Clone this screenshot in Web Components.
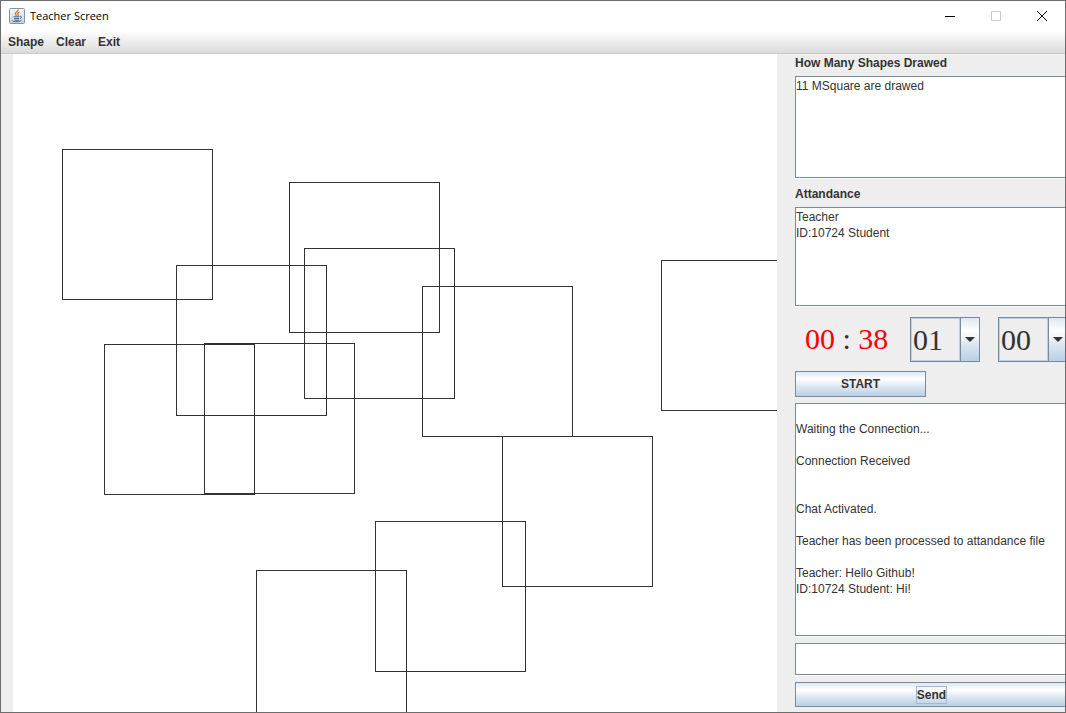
<!DOCTYPE html>
<html lang="en">
<head>
<meta charset="utf-8">
<title>Teacher Screen</title>
<style>
html, body { margin: 0; height: 100%; }
body { font: 12px/16px "Liberation Sans", Arial, sans-serif; color: #333; overflow: hidden; }
</style>
</head>
<body>
<app-window></app-window>
<script>
const define = (name, html, setup) => {
  const template = document.createElement('template');
  template.innerHTML = html;
  customElements.define(name, class extends HTMLElement {
    constructor() {
      super();
      this.attachShadow({ mode: 'open' }).append(template.content.cloneNode(true));
    }
    connectedCallback() { if (setup) setup(this, this.shadowRoot); }
  });
};

define('title-bar', `
<style>
:host { display: flex; align-items: center; height: 30px; padding-left: 8px; background: #fff; color: #000; }
h1 { flex: 1; margin: 0 0 0 5px; font: 11px/16px "Open Sans", sans-serif; }
.logo { display: block; }
button { width: 46px; height: 30px; padding: 0; border: 0; background: none; display: grid; place-items: center; }
</style>
<svg class="logo" width="16" height="16" viewBox="0 0 16 16" aria-hidden="true">
  <defs><linearGradient id="g" x2="0" y2="1"><stop stop-color="#f6f8fa"/><stop offset="1" stop-color="#c4d0dc"/></linearGradient></defs>
  <rect x=".5" y=".5" width="15" height="15" rx="1" fill="url(#g)" stroke="#7f97ae"/>
  <path d="M9 1.500c1 2-3.300 2.600-2.600 4.600.2.700 1 1 1.200 1.700M10.500 4c-1.600.7-2.600 1.600-1.400 2.700.4.500 0 1-.4 1.300" fill="none" stroke="#e0741c" stroke-width="1.300"/>
  <path d="M4.500 8.800h6M5 10.600h5M10.800 8.300c2.500-.3 1.900 1.900 0 2.400M3.300 12.400c-.6 1.700 8.500 1.500 9.200-.2M5.500 12.200h4.500" fill="none" stroke="#3f6b94" stroke-width="1"/>
</svg>
<h1>Teacher Screen</h1>
<button aria-label="Minimize"><svg width="10" height="10"><path d="M0 5h10v1H0z"/></svg></button>
<button aria-label="Maximize" disabled><svg width="10" height="10"><path d="M.5.5h9v9h-9z" fill="none" stroke="#ccc"/></svg></button>
<button aria-label="Close"><svg width="10" height="10"><path d="M0 0l10 10M10 0L0 10" stroke="#000"/></svg></button>
`);

define('menu-bar', `
<style>
:host { display: block; border-bottom: 1px solid #ccc; background: linear-gradient(#fff, #dadada); }
nav { display: flex; gap: 12px; height: 22px; padding-left: 7px; }
button { padding: 0; border: 0; background: none; color: inherit; font: bold 12px/20px "Liberation Sans", Arial, sans-serif; }
</style>
<nav><button>Shape</button><button>Clear</button><button>Exit</button></nav>
`);

define('shape-canvas', `
<style>
:host { display: flex; min-width: 0; background: #fff; overflow: hidden; }
svg { flex: 1; min-width: 0; height: auto; }
</style>
<svg role="img" aria-label="Drawing area"><g transform="translate(.5 .5)" fill="none" stroke="#333"></g></svg>
`, (host, root) => {
  const squares = [[49,95],[276,128],[291,194],[163,211],[409,232],[91,290],[191,289],[648,206],[489,382],[362,467],[243,516]];
  root.querySelector('g').innerHTML = squares.map(([x, y]) => `<rect x="${x}" y="${y}" width="150" height="150"/>`).join('');
});

define('text-panel', `
<style>
:host { display: flex; flex-direction: column; gap: 5px; }
label { font-weight: bold; }
label:empty { display: none; }
textarea { flex: 1; box-sizing: border-box; min-height: 0; margin: 0; padding: 1px 0 0; border: 1px solid #7a8a99; border-width: 1px 0 1px 1px; box-shadow: 0 1px #fff; border-radius: 0; outline: 0; resize: none; overflow: hidden; background: #fff; color: #333; font: 12px/16px "Liberation Sans", Arial, sans-serif; }
</style>
<label for="t"></label><textarea id="t" readonly></textarea>
`, (host, root) => {
  const area = root.querySelector('textarea');
  root.querySelector('label').textContent = host.getAttribute('label') || '';
  area.setAttribute('aria-label', host.getAttribute('label') || 'Chat');
  area.textContent = host.textContent;
});

define('time-select', `
<style>
:host { display: grid; width: 70px; height: 45px; }
select, .arrow { grid-area: 1 / 1; }
select { appearance: none; box-sizing: border-box; width: 100%; margin: 0; padding: 0 20px 0 2px; border: 1px solid #7a8a99; border-radius: 0; background: linear-gradient(#7a8a99, #7a8a99) right 18px top / 1px 100% no-repeat, linear-gradient(#dde8f3, #fff 30%, #dde8f3 60%, #b8cfe5) right / 18px 100% no-repeat, linear-gradient(#b8cfe5, #b8cfe5) left / 1px 100% no-repeat, linear-gradient(#b8cfe5, #b8cfe5) right 19px top / 1px 100% no-repeat, linear-gradient(#b8cfe5, #b8cfe5) top / 100% 1px no-repeat, linear-gradient(#b8cfe5, #b8cfe5) bottom / 100% 1px no-repeat, #eee; color: #333; font: 30px/40px "Liberation Serif", "Times New Roman", serif; }
.arrow { place-self: center end; margin-right: 5px; pointer-events: none; }
</style>
<select><option></option></select>
<svg class="arrow" width="10" height="5"><path d="M0 0h10L5 5z" fill="#333"/></svg>
`, (host, root) => {
  root.querySelector('option').textContent = host.getAttribute('value');
  root.querySelector('select').setAttribute('aria-label', host.getAttribute('label'));
});

define('metal-button', `
<style>
:host { display: flex; }
button { flex: 1; padding: 0; border: 1px solid #7a8a99; background: linear-gradient(#dde8f3, #fff 30%, #dde8f3 60%, #b8cfe5); color: #333; font: bold 12px/16px "Liberation Sans", Arial, sans-serif; }
span { display: inline-block; border: 1px solid transparent; }
:host([focused]) span { border-color: #a3b8cc; }
</style>
<button><span><slot></slot></span></button>
`);

define('session-timer', `
<style>
:host { display: flex; height: 45px; }
output { flex: none; width: 105px; padding-left: 10px; font: 30px/44px "Liberation Serif", "Times New Roman", serif; white-space: pre; }
b { font-weight: normal; color: #f00; }
time-select { flex: none; margin-right: 18px; }
</style>
<output><b>00</b> : <b>38</b></output>
<time-select value="01" label="Minutes"></time-select>
<time-select value="00" label="Seconds"></time-select>
`);

define('side-bar', `
<style>
:host { display: flex; flex-direction: column; padding: 1px 0 5px; overflow: hidden; }
.shapes { height: 123px; margin-bottom: 8px; }
.people { height: 120px; margin-bottom: 11px; }
session-timer { margin-bottom: 9px; }
.start { width: 131px; height: 26px; margin-bottom: 6px; }
.chat { flex: 1; margin-bottom: 7px; }
input { box-sizing: border-box; height: 32px; margin: 0 0 7px; padding: 0 2px; border: 1px solid #7a8a99; border-right: 0; box-shadow: 0 1px #fff; border-radius: 0; outline: 0; background: #fff; font: 12px/16px "Liberation Sans", Arial, sans-serif; }
.send { height: 25px; margin-right: -3px; }
</style>
<text-panel class="shapes" label="How Many Shapes Drawed">11 MSquare are drawed</text-panel>
<text-panel class="people" label="Attandance">Teacher
ID:10724 Student</text-panel>
<session-timer></session-timer>
<metal-button class="start">START</metal-button>
<text-panel class="chat">
Waiting the Connection...

Connection Received


Chat Activated.

Teacher has been processed to attandance file

Teacher: Hello Github!
ID:10724 Student: Hi!</text-panel>
<input aria-label="Message">
<metal-button class="send" focused>Send</metal-button>
`);

define('app-window', `
<style>
:host { display: flex; flex-direction: column; box-sizing: border-box; min-height: 100vh; border: 1px solid #6d6d6d; background: #eee; }
main { flex: 1; display: grid; grid-template-columns: minmax(0, 1fr) 270px; column-gap: 18px; padding-left: 12px; }
</style>
<title-bar></title-bar>
<menu-bar></menu-bar>
<main><shape-canvas></shape-canvas><side-bar></side-bar></main>
`);
</script>
</body>
</html>
